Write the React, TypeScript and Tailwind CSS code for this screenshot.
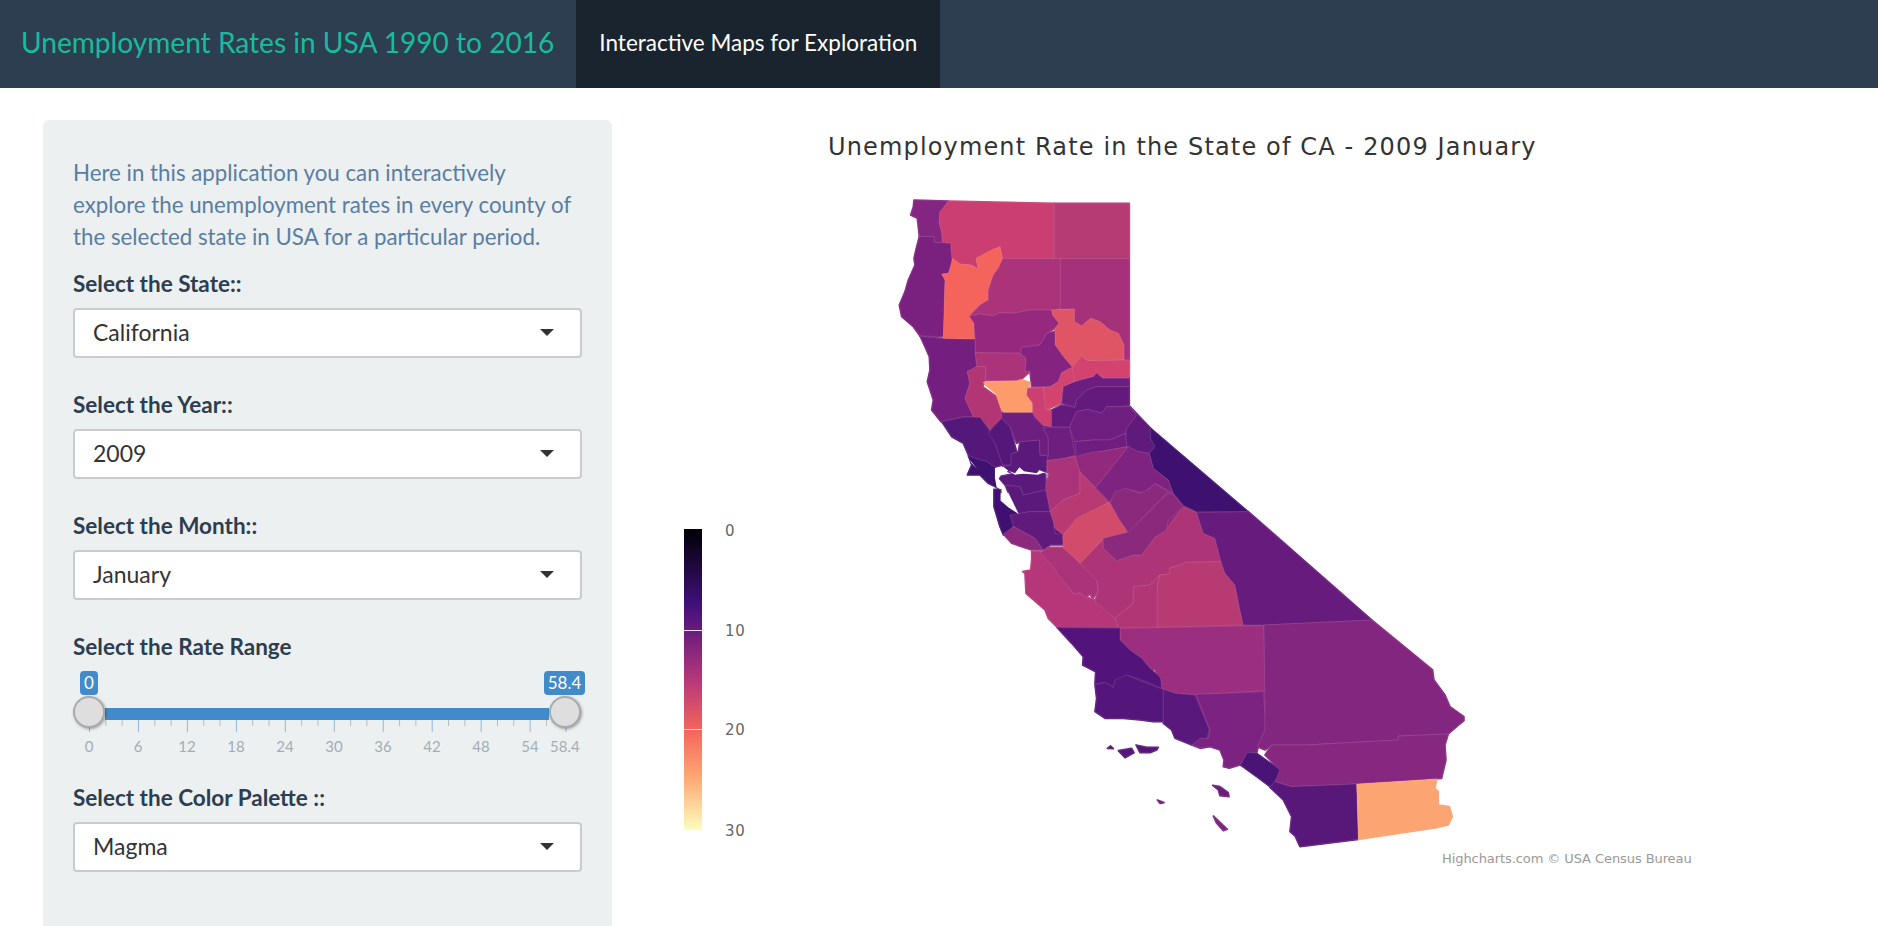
import React from 'react';

// county outlines, traced from the map in crop coordinates (3x zoom)
type County = { fill: string; d: string };

const northCounties: County[] = [
  { fill: '#822681', d: '102,30 205,33 190,55 180,65 178,100 185,125 187,157 162,157 162,140 118,140 112,85 92,75 100,50' },
  { fill: '#cb3e71', d: '205,33 523,40 523,206 368,206 360,170 335,180 288,205 295,238 275,225 240,222 215,205 212,160 187,157 185,125 178,100 180,65' },
  { fill: '#b63a73', d: '523,40 748,40 748,206 523,206' },
  { fill: '#7a2180', d: '118,140 162,140 162,157 212,160 215,205 218,235 205,250 185,252 195,270 190,440 120,438 100,410 65,380 58,345 75,305 85,270 105,225 102,205 110,170' },
  { fill: '#f4645c', d: '218,205 240,222 275,225 295,238 288,205 335,180 360,170 368,206 355,235 340,255 325,300 325,330 300,345 268,378 282,400 285,448 190,446 195,270 185,252 205,250' },
  { fill: '#aa3379', d: '368,206 541,206 541,357 515,360 450,360 400,370 360,368 340,378 300,372 268,378 300,345 325,330 325,300 340,255 355,235' },
  { fill: '#a5317b', d: '541,206 748,206 748,510 732,510 732,465 715,430 690,420 660,395 632,385 605,408 583,395 583,357 541,357' },
  { fill: '#96297d', d: '268,378 300,372 340,378 360,368 400,370 450,360 515,360 518,375 537,400 525,415 500,430 480,465 425,472 420,490 285,488 285,448 282,400' },
  { fill: '#e05566', d: '515,360 583,357 583,395 605,408 632,385 660,395 690,420 715,430 732,465 732,510 650,512 622,512 605,497 577,532 550,500 525,465 525,415 537,400 518,375' },
  { fill: '#852480', d: '525,425 525,465 550,500 577,532 545,548 535,575 510,590 455,590 450,545 435,545 438,505 420,490 425,472 480,465 500,430' },
  { fill: '#aa3379', d: '285,488 420,490 438,505 435,545 450,545 420,572 315,572 318,530 290,530' },
  { fill: '#741f80', d: '120,438 190,446 285,448 285,488 290,530 262,545 270,580 255,625 280,680 250,680 183,695 155,660 160,630 142,575 150,540 148,500 135,470' },
  { fill: '#b23674', d: '262,545 290,530 318,530 315,572 308,590 350,620 365,668 365,685 330,718 305,688 280,680 255,625 270,580' },
  { fill: '#fe9b6a', d: '308,577 340,575 410,572 420,568 450,578 440,615 458,640 458,668 370,668 362,650 352,625 350,612' },
  { fill: '#cb4071', d: '442,595 490,592 500,660 515,660 515,710 490,705 465,680 458,668 458,640 440,615' },
  { fill: '#d2446e', d: '490,592 510,590 535,575 545,548 577,532 585,545 585,575 550,590 545,640 497,660' },
  { fill: '#d2436f', d: '577,532 605,497 622,512 650,512 748,510 748,565 668,565 650,550 640,560 600,570 585,575' },
  { fill: '#6b1d80', d: '545,640 550,590 585,575 640,560 650,550 668,565 748,565 748,590 650,590 620,600 590,630 585,652' },
  { fill: '#641a7d', d: '515,660 545,645 585,652 590,630 620,600 650,590 748,590 748,645 720,650 680,650 665,670 625,658 590,665 568,712 515,710' },
  { fill: '#6f1f80', d: '568,712 590,665 625,658 665,670 680,650 720,650 750,650 770,675 740,715 738,730 690,750 640,750 585,755' },
  { fill: '#6f1e7f', d: '585,755 640,750 690,750 738,730 740,770 660,785 620,800 590,815' },
  { fill: '#5f1a7c', d: '750,650 815,718 812,745 825,770 808,790 775,785 740,770 738,730 740,715 770,675' },
  { fill: '#3e1070', d: '812,715 1104,965 950,965 910,945 880,910 865,870 820,835 808,790 825,770 812,745' },
];

const bayCounties: County[] = [
  { fill: '#54177a', d: '185,275 250,262 300,262 325,298 345,340 368,405 345,412 320,395 285,385 265,375 250,340 215,320' },
  { fill: '#54177a', d: '325,310 365,265 390,290 410,365 395,372 393,405 368,405 345,340' },
  { fill: '#3e1070', d: '265,378 285,385 320,395 345,412 345,445 355,475 325,460 300,435 262,435 275,405 270,390' },
  { fill: '#5c197c', d: '393,372 415,365 420,335 478,330 480,375 505,378 497,430 470,430 440,430 410,432 385,425 368,410 393,405' },
  { fill: '#6d1f80', d: '365,248 458,248 465,265 490,290 505,325 505,378 480,375 478,330 420,335 410,340 390,290 365,265' },
  { fill: '#6d1f80', d: '490,292 570,292 585,375 555,385 500,392 505,378 505,325' },
  { fill: '#aa3379', d: '500,392 585,380 600,425 600,490 550,510 510,545 497,470 505,440' },
  { fill: '#b83a73', d: '600,425 686,517 598,565 590,575 550,612 520,590 510,545 550,510 600,490' },
  { fill: '#92297d', d: '585,380 640,365 660,365 745,350 648,472 600,425' },
  { fill: '#7e2480', d: '648,472 745,350 775,365 808,370 820,415 865,450 878,488 865,482 825,460 790,490 755,480 700,500 690,517' },
  { fill: '#5b197c', d: '358,440 395,432 410,430 470,430 497,425 497,480 430,495 420,470 376,466 356,448' },
  { fill: '#5b197c', d: '376,466 420,470 430,495 497,480 510,545 450,545 416,552 385,488' },
  { fill: '#5f1a7c', d: '390,555 450,545 510,545 520,575 525,610 550,615 550,645 510,645 490,660 465,625 420,600 400,590' },
  { fill: '#3f0f72', d: '342,478 362,478 362,512 385,532 416,552 390,555 400,590 370,615 360,590 342,530' },
  { fill: '#8b297d', d: '370,612 400,590 420,600 465,625 490,660 455,660 425,650 395,640' },
];

const centralCounties: County[] = [
  { fill: '#b5377a', d: '335,305 360,305 415,365 460,432 478,430 510,445 520,447 590,505 595,532 412,532 385,505 375,480 318,430 315,370 308,365 332,360 335,330' },
  { fill: '#aa3379', d: '360,310 385,292 430,292 480,340 530,390 535,420 530,430 518,447 510,432 498,442 480,428 462,432 415,375 400,350' },
  { fill: '#ad3476', d: '480,340 548,270 550,295 590,332 640,315 665,315 705,262 745,230 790,170 830,188 850,250 885,265 903,335 800,337 748,355 748,372 720,375 690,405 640,410 640,460 585,505 525,455 535,420 530,390' },
  { fill: '#d34b6a', d: '568,157 622,247 550,265 482,338 430,295 428,258 470,205 472,203' },
  { fill: '#8b297d', d: '550,265 622,247 700,175 705,165 745,130 760,132 790,170 745,210 740,240 705,262 665,315 640,315 590,332 550,295' },
  { fill: '#8b297d', d: '570,157 585,125 620,115 660,130 690,115 705,100 745,125 700,170 625,247 595,205' },
  { fill: '#b03675', d: '585,505 640,460 640,410 690,405 720,375 712,405 712,532 595,532' },
  { fill: '#b83a72', d: '712,532 712,405 720,375 748,372 748,355 800,337 903,335 915,370 945,405 960,480 970,525' },
  { fill: '#661b7d', d: '830,188 985,185 1355,510 1030,525 970,525 960,480 945,405 915,370 903,335 885,265 850,250' },
  { fill: '#9c2e7f', d: '600,535 1032,527 1037,722 825,735 765,730 725,715 722,685 705,660 690,655 665,625 630,600 600,570' },
  { fill: '#52147a', d: '412,533 600,535 600,570 630,600 665,625 690,655 722,685 725,715 680,695 620,675 580,712 555,697 525,702 527,665 488,645 490,620 455,580' },
  { fill: '#54167a', d: '525,705 555,697 580,712 585,690 620,675 680,700 730,718 730,815 700,815 660,810 610,805 555,805 525,785 530,745' },
  { fill: '#59187b', d: '730,718 765,730 825,735 868,840 860,865 815,885 765,865 755,840 730,820' },
];

const southCounties: County[] = [
  { fill: '#7c2381', d: '258,313 460,305 465,375 465,420 445,470 440,490 412,487 390,525 358,535 340,530 342,510 330,480 300,470 270,475 245,465 270,445 295,445 300,420' },
  { fill: '#82267f', d: '462,105 785,90 968,240 972,270 1005,315 1020,350 1062,380 1062,392 1040,410 1015,432 865,438 865,450 590,465 485,465 465,480 442,470 465,420 465,375' },
  { fill: '#862780', d: '485,465 590,465 865,450 865,438 1015,432 1005,465 1008,510 995,565 740,582 545,590 495,575 510,540 465,495' },
  { fill: '#4a1376', d: '412,487 440,490 510,540 495,575 480,590 440,560 392,525' },
  { fill: '#58187a', d: '495,575 545,590 740,582 745,748 570,770 555,738 540,725 545,680 520,630 480,592' },
  { fill: '#fda572', d: '740,582 980,568 975,595 985,605 985,645 1018,650 1027,680 1015,705 985,712 745,748' },
  { fill: '#54167a', d: '78,465 110,472 145,472 140,480 120,488 90,488' },
  { fill: '#54167a', d: '25,482 65,475 72,488 45,503' },
  { fill: '#54167a', d: '-8,475 2,468 10,476' },
  { fill: '#6a1c7e', d: '308,586 330,590 355,608 357,620 330,617 325,600' },
  { fill: '#6a1c7e', d: '142,630 162,638 150,640' },
  { fill: '#7c2381', d: '310,678 352,718 340,722 320,700' },
];

const groups = [
  { x: 880, y: 190, counties: northCounties },
  { x: 880, y: 330, counties: bayCounties },
  { x: 920, y: 450, counties: centralCounties },
  { x: 1110, y: 590, counties: southCounties },
];

const CaliforniaMap = () => (
  <svg className="block shrink-0" width={1266} height={806} viewBox="612 120 1266 806">
    <defs>
      <linearGradient id="magma" x1="0" y1="0" x2="0" y2="1">
        <stop offset="0" stopColor="#000004" />
        <stop offset="0.25" stopColor="#40107a" />
        <stop offset="0.333" stopColor="#671b7d" />
        <stop offset="0.5" stopColor="#b6377a" />
        <stop offset="0.667" stopColor="#f4645c" />
        <stop offset="0.83" stopColor="#feaa74" />
        <stop offset="1" stopColor="#fcfdbf" />
      </linearGradient>
    </defs>

    <text x={828} y={155} fill="#333333" fontFamily="'DejaVu Sans', sans-serif" fontSize={24} letterSpacing={1.15}>
      Unemployment Rate in the State of CA - 2009 January
    </text>

    {/* interior fill under the counties, closes slivers between traced outlines */}
    <polygon
      transform="translate(920 450) scale(0.3333)"
      points="480,340 568,157 585,100 700,60 760,100 800,170 830,188 850,250 885,265 903,335 640,400"
      fill="#8b297d"
    />
    <polygon transform="translate(880 330) scale(0.3333)" points="365,265 570,292 740,320 800,360 600,425 505,400 480,375" fill="#6d1f80" />
    <polygon transform="translate(880 330) scale(0.3333)" points="497,425 510,545 550,615 490,660 400,590 420,470" fill="#5b197c" />

    {/* same-colour stroke first so neighbouring outlines close up */}
    {groups.map((g, i) => (
      <g key={i} transform={`translate(${g.x} ${g.y}) scale(0.3333)`}>
        {g.counties.map((c, j) => (
          <polygon key={j} points={c.d} fill={c.fill} stroke={c.fill} strokeWidth={5} strokeLinejoin="round" />
        ))}
      </g>
    ))}
    {groups.map((g, i) => (
      <g key={i} transform={`translate(${g.x} ${g.y}) scale(0.3333)`}>
        {g.counties.map((c, j) => (
          <polygon key={j} points={c.d} fill={c.fill} stroke="#e4b4cc" strokeOpacity={0.35} strokeWidth={1.3} strokeLinejoin="round" />
        ))}
      </g>
    ))}

    {/* bay, strait and delta */}
    <g transform="translate(880 330) scale(0.3333)" fill="#ffffff">
      <polygon points="345,414 370,410 385,422 362,436 356,446 374,468 362,478 350,472 345,445" />
      <polygon points="362,490 385,488 416,552 385,532 362,512" />
      <polygon points="385,422 405,430 418,412 432,424 470,430 478,420 510,434 490,428 474,434 430,431 405,434" />
      <polygon points="270,390 292,418 274,398" />
    </g>

    {/* colour axis */}
    <rect x={684} y={529} width={18} height={301} fill="url(#magma)" />
    <rect x={684} y={630} width={18} height={1} fill="#e6e6e6" />
    <rect x={684} y={729} width={18} height={1} fill="#e6e6e6" />
    {[
      ['0', 536],
      ['10', 636],
      ['20', 735],
      ['30', 836],
    ].map(([label, y]) => (
      <text key={label} x={725} y={y} fill="#666666" fontFamily="'DejaVu Sans', sans-serif" fontSize={15} letterSpacing={0.6}>
        {label}
      </text>
    ))}

    <text x={1442} y={863} fill="#999999" fontFamily="'DejaVu Sans', sans-serif" fontSize={13} letterSpacing={-0.08}>
      Highcharts.com © USA Census Bureau
    </text>
  </svg>
);

const SelectBox = ({ label, value, className }: { label: string; value: string; className?: string }) => (
  <div className={className}>
    <div className="mb-[12px] h-[25px] text-[22.5px] font-bold leading-[25px] text-[#2c3e50]">{label}</div>
    <div className="flex h-[50px] items-center justify-between rounded-[4px] border-2 border-[#cbcbcb] bg-white pb-[2px] pl-[18px] pr-[26px] text-[23px] text-[#333333]">
      <span>{value}</span>
      <span className="h-0 w-0 border-x-[7px] border-t-[7px] border-x-transparent border-t-[#333333]" />
    </div>
  </div>
);

const SCALE = 476.5 / 58.4;
const tickValues = [0, 6, 12, 18, 24, 30, 36, 42, 48, 54];
const minorTicks = Array.from({ length: 29 }, (_, i) => i * 2).filter((v) => v % 6 !== 0);

const Handle = () => (
  <div className="relative z-10 h-[32px] w-[32px] shrink-0 rounded-full border-2 border-[#aaaaaa] bg-[#dedede] shadow-[1px_1px_3px_rgba(0,0,0,0.35)]" />
);

const RangeSlider = () => (
  <div className="mt-[12px] flex w-[509px] flex-col">
    <div className="flex h-[24px] justify-between pl-[7px]">
      <div className="flex w-[18px] items-center justify-center rounded-[4px] bg-[#428bca] text-[17px] text-white">0</div>
      <div className="-mr-[3px] flex w-[41px] items-center justify-center rounded-[4px] bg-[#428bca] text-[17px] text-white">58.4</div>
    </div>
    <div className="mt-[1px] flex h-[32px] w-[508px]">
      <Handle />
      <div className="mt-[12px] h-[12px] flex-1 bg-[#428bca]" />
      <Handle />
    </div>
    <svg className="-mt-[8px] block" width={509} height={12}>
      {minorTicks.map((v) => (
        <rect key={v} x={16 + v * SCALE} y={0} width={1} height={6} fill="#bbbbbb" />
      ))}
      {[...tickValues, 58.4].map((v) => (
        <rect key={v} x={16 + v * SCALE} y={0} width={1} height={12} fill="#8fb8de" />
      ))}
    </svg>
    <div className="mt-[4px] flex pl-[16px] text-[15px] leading-[20px] text-[#a3adb5]">
      {tickValues.map((v) => (
        <div key={v} className="w-[49px] shrink-0">
          <span className="inline-block -translate-x-1/2">{v}</span>
        </div>
      ))}
      <div className="w-0">
        <span className="inline-block -translate-x-[29px]">58.4</span>
      </div>
    </div>
  </div>
);

export default function App() {
  return (
    <div className="flex h-screen flex-col overflow-hidden bg-white font-['Lato','Liberation_Sans',sans-serif]">
      <header className="flex h-[88px] shrink-0 items-stretch bg-[#2c3e50]">
        <div className="flex items-center pb-[4px] pl-[21px] pr-[22px] text-[28.1px] text-[#18bc9c]">Unemployment Rates in USA 1990 to 2016</div>
        <div className="flex items-center bg-[#1a242f] px-[23px] pb-[2px] text-[22.5px] text-white">Interactive Maps for Exploration</div>
      </header>

      <div className="flex min-h-0 flex-1 pl-[43px] pt-[32px]">
        <aside className="w-[569px] shrink-0 rounded-t-[6px] bg-[#ecf0f1] px-[30px] pt-[37px]">
          <p className="h-[96px] text-[22.3px] leading-[32px] text-[#5a7ea3]">
            Here in this application you can interactively explore the unemployment rates in every county of the selected state in USA for a
            particular period.
          </p>
          <SelectBox label="Select the State::" value="California" className="mt-[18px]" />
          <SelectBox label="Select the Year::" value="2009" className="mt-[34px]" />
          <SelectBox label="Select the Month::" value="January" className="mt-[34px]" />
          <div className="mt-[34px] h-[25px] text-[22.5px] font-bold leading-[25px] text-[#2c3e50]">Select the Rate Range</div>
          <RangeSlider />
          <SelectBox label="Select the Color Palette ::" value="Magma" className="mt-[29px]" />
        </aside>
        <CaliforniaMap />
      </div>
    </div>
  );
}
